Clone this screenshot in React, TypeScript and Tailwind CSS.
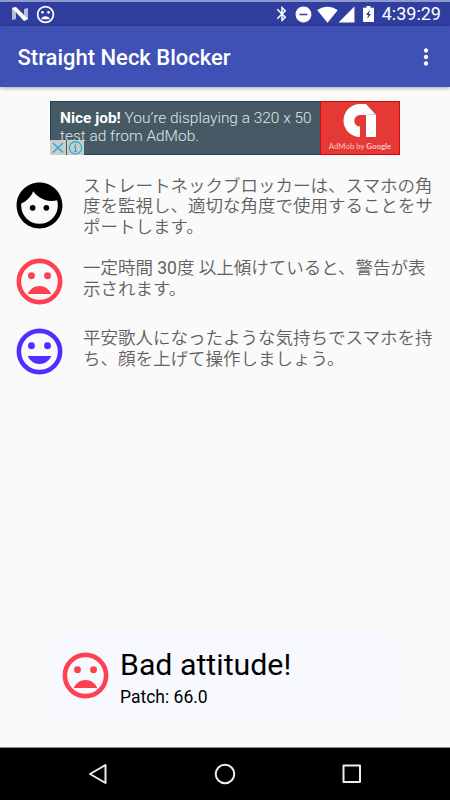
import React from 'react';
import {
  MdBluetooth,
  MdDoNotDisturbOn,
  MdFace,
  MdMoreVert,
  MdSignalCellular4Bar,
  MdSignalWifi4Bar,
} from 'react-icons/md';

type IconProps = { className?: string };

const SadFace: React.FC<IconProps> = ({ className }) => (
  <svg className={className} viewBox="0 0 24 24" fill="currentColor">
    <circle cx="12" cy="12" r="9" fill="none" stroke="currentColor" strokeWidth="2" />
    <circle cx="8.5" cy="9.5" r="1.5" />
    <circle cx="15.5" cy="9.5" r="1.5" />
    <path d="M12 14c-2.33 0-4.31 1.46-5.11 3.5h10.22c-.8-2.04-2.78-3.5-5.11-3.5z" />
  </svg>
);

const HappyFace: React.FC<IconProps> = ({ className }) => (
  <svg className={className} viewBox="0 0 24 24" fill="currentColor">
    <circle cx="12" cy="12" r="9" fill="none" stroke="currentColor" strokeWidth="2" />
    <circle cx="8.5" cy="9.5" r="1.5" />
    <circle cx="15.5" cy="9.5" r="1.5" />
    <path d="M12 17.5c2.33 0 4.31-1.46 5.11-3.5H6.89c.8 2.04 2.78 3.5 5.11 3.5z" />
  </svg>
);

const hints = [
  {
    icon: MdFace,
    color: 'text-black',
    row: 'h-[76px]',
    text: 'pt-[0.5px]',
    body: (
      <>
        ストレートネックブロッカーは、スマホの角
        <br />
        度を監視し、適切な角度で使用することをサ
        <br />
        ポートします。
      </>
    ),
  },
  {
    icon: SadFace,
    color: 'text-[#ff4050]',
    row: 'h-[70px]',
    text: 'pt-[7px]',
    body: (
      <>
        一定時間 <span className="font-normal">30</span>度 以上傾けていると、警告が表
        <br />
        示されます。
      </>
    ),
  },
  {
    icon: HappyFace,
    color: 'text-[#4d30ff]',
    row: 'h-[70px]',
    text: 'pt-[7px]',
    body: (
      <>
        平安歌人になったような気持ちでスマホを持
        <br />
        ち、顔を上げて操作しましょう。
      </>
    ),
  },
];

const StatusBar: React.FC = () => (
  <div className="flex h-[26px] shrink-0 items-center border-t-2 border-[#8f97cf] bg-[#303f9f] text-white">
    <svg className="ml-[12px] h-[14px] w-[16px] shrink-0" viewBox="0 0 16 14">
      <path d="M0 1 4 0V12L0 13ZM12 2 16 1V12L12 14Z" fill="#fff" opacity=".65" />
      <path d="M0 1 4 0 16 12 12 14Z" fill="#fff" />
    </svg>
    <SadFace className="ml-[7px] size-[21px] shrink-0" />
    <div className="ml-auto flex items-center pr-[9px]">
      <MdBluetooth className="size-[18px]" />
      <MdDoNotDisturbOn className="ml-[3px] size-[19px]" />
      <MdSignalWifi4Bar className="ml-[4px] size-[21px]" />
      <MdSignalCellular4Bar className="-ml-px size-[19px]" />
      <svg className="ml-[7px] h-[16px] w-[11px]" viewBox="0 0 11 16">
        <path d="M3.5 0h4v1.7H11V16H0V1.7h3.5Z" fill="#fff" />
        <path d="M6.6 4 3 9H5.2L4.2 13 8 8H6Z" fill="#303f9f" />
      </svg>
      <span className="ml-[7.5px] text-[18px] leading-6">4:39:29</span>
    </div>
  </div>
);

const AdBanner: React.FC = () => (
  <div className="relative mx-auto flex h-[54px] w-[350px] bg-[#455a64]">
    <div className="w-[270px] border border-r-0 border-[#1d4354] pt-[7px] pl-[9px] text-[15.45px] leading-[18px] font-light whitespace-nowrap text-[#e1e6e8]">
      <p>
        <span className="font-bold text-white">Nice job!</span> You’re displaying a 320 x 50
      </p>
      <p>test ad from AdMob.</p>
    </div>
    <div className="flex w-[80px] flex-col items-center border border-[#d50808] bg-[#e53935] pt-[2px]">
      <svg className="h-[34px] w-[34px] shrink-0" viewBox="0 0 34 34">
        <path
          d="M17 0h6l10 11v22H23V11h-6a5.8 5.8 0 0 0 0 11.6v10.4A16.5 16.5 0 0 1 17 0Z"
          fill="#fff"
        />
        <path d="M23 11h10L32 9.5Z" fill="#c9c9c9" />
      </svg>
      <span className="mt-[2px] font-[Lato] text-[7.8px] leading-[12px] whitespace-nowrap text-[#fbc5c3]">
        AdMob by <span className="font-bold">Google</span>
      </span>
    </div>
    {/* Close and info badges over the ad text */}
    <div className="absolute bottom-0 left-0 flex gap-px">
      <svg className="h-[15px] w-[16px] bg-[#c9cbcc]" viewBox="0 0 16 15" fill="none" stroke="#20aed0" strokeWidth="1.3">
        <path d="M3 3l10 9.5M13 3L3 12.5" />
      </svg>
      <svg className="h-[15px] w-[17px] bg-[#c9cbcc]" viewBox="0 0 17 15" fill="none" stroke="#20aed0" strokeWidth="1.2">
        <circle cx="8.5" cy="7.8" r="6.2" />
        <path d="M8.5 3.8v1.6M8.5 6.6v5M7 6.9h1.5M7 11.5h3" />
      </svg>
    </div>
  </div>
);

const App: React.FC = () => {
  return (
    <div className="flex h-[800px] w-[450px] flex-col overflow-hidden bg-[#fafafa] font-[Roboto,'Noto_Sans_CJK_JP',sans-serif]">
      <StatusBar />
      <header className="flex h-[61px] shrink-0 items-center justify-between bg-[#3f51b5] pr-[11px] pl-[17.5px] text-white shadow-[0_1px_4px_rgba(0,0,0,0.35)]">
        <h1 className="pt-[2px] text-[22px] font-medium">Straight Neck Blocker</h1>
        <MdMoreVert className="size-[26px]" />
      </header>

      <main className="flex flex-1 flex-col pt-[14px]">
        <AdBanner />
        <div className="mt-[20px] flex flex-col">
          {hints.map((hint, idx) => (
            <div key={idx} className={`flex ${hint.row}`}>
              <hint.icon className={`mt-[3px] ml-[11.5px] size-[55px] shrink-0 ${hint.color}`} />
              <p className={`ml-[16.5px] text-[17.5px] leading-[20.5px] font-[350] whitespace-nowrap text-[#606060] ${hint.text}`}>
                {hint.body}
              </p>
            </div>
          ))}
        </div>

        {/* Toast */}
        <div className="mx-auto mt-auto mb-[31px] flex h-[83px] w-[350px] items-center rounded-[8px] bg-[#f8f9ff] pl-[7.5px] text-black">
          <SadFace className="mt-px size-[55px] text-[#ff4050]" />
          <div className="ml-[7.5px] pt-[6px]">
            <p className="text-[30.3px] leading-[36px]">Bad attitude!</p>
            <p className="mt-[3px] text-[17.5px] leading-[22px]">Patch: 66.0</p>
          </div>
        </div>
      </main>

      <nav className="flex h-[53px] shrink-0 items-center border-t border-[#8a8a8a] bg-black">
        <svg className="ml-[87px] size-[22px]" viewBox="0 0 22 22" fill="none" stroke="#eee" strokeWidth="2" strokeLinejoin="round">
          <path d="M18.5 2v18L3 11Z" />
        </svg>
        <svg className="ml-[105px] size-[22px]" viewBox="0 0 22 22" fill="none" stroke="#eee" strokeWidth="2">
          <circle cx="11" cy="11" r="9.3" />
        </svg>
        <svg className="ml-[105px] size-[22px]" viewBox="0 0 22 22" fill="none" stroke="#eee" strokeWidth="2" strokeLinejoin="round">
          <path d="M2.5 2.5h16.5v16.500H2.5Z" />
        </svg>
      </nav>
    </div>
  );
};

export default App;
